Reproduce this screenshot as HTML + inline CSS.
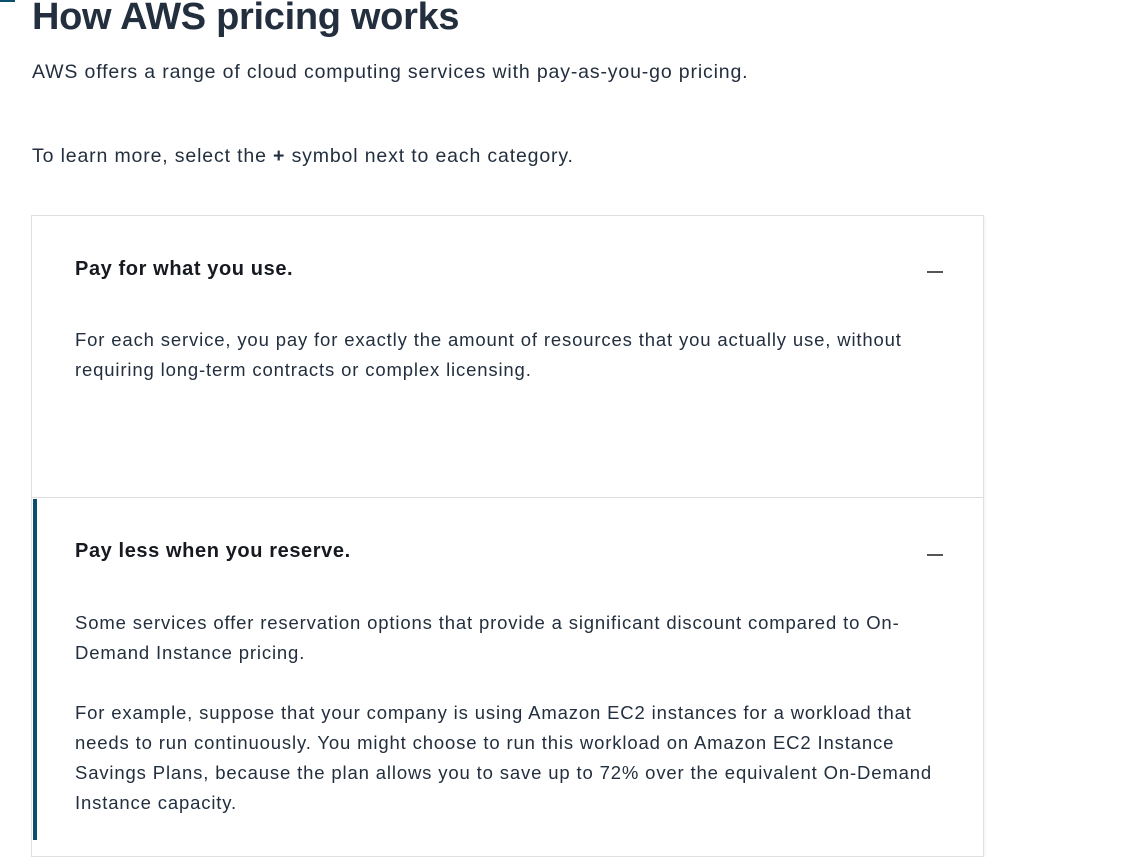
<!DOCTYPE html>
<html><head><meta charset="utf-8"><style>
html,body{margin:0;padding:0;background:#fff;width:1128px;height:840px;overflow:hidden;font-family:"Liberation Sans",sans-serif;color:#16191f;}
.mark{position:absolute;left:0;top:0;width:15px;height:2px;background:#0b4f6c}
h1{position:absolute;left:32px;top:-4px;margin:0;font-size:38px;font-weight:bold;color:#232f3e;letter-spacing:-0.3px;white-space:nowrap}
.p{position:absolute;font-size:19.5px;color:#232f3e;white-space:nowrap;letter-spacing:0.85px}
.card{position:absolute;left:31px;top:215px;width:951px;height:640px;border:1px solid #e0e0e0;box-shadow:1px 1px 3px rgba(0,0,0,0.06)}
.div{position:absolute;left:32px;top:497px;width:951px;height:1px;background:#ddd}
.bar{position:absolute;left:33px;top:499px;width:4px;height:341px;background:#0b4f6c}
.h{position:absolute;left:75px;font-size:20px;font-weight:bold;color:#16191f;white-space:nowrap;letter-spacing:0.6px}
.t{position:absolute;left:75px;font-size:18.5px;line-height:30px;color:#232f3e;white-space:nowrap;letter-spacing:0.85px}
.dash{position:absolute;left:927px;width:16px;height:2px;background:#555}
</style></head><body>
<div class="mark"></div>
<h1>How AWS pricing works</h1>
<div class="p" style="left:32px;top:61px">AWS offers a range of cloud computing services with pay-as-you-go pricing.</div>
<div class="p" style="left:32px;top:145px">To learn more, select the <b>+</b> symbol next to each category.</div>
<div class="card"></div>
<div class="div"></div>
<div class="bar"></div>
<div class="h" style="top:258px">Pay for what you use.</div>
<div class="dash" style="top:271px"></div>
<div class="t" style="top:325px">For each service, you pay for exactly the amount of resources that you actually use, without<br>requiring long-term contracts or complex licensing.</div>
<div class="h" style="top:540px">Pay less when you reserve.</div>
<div class="dash" style="top:554px"></div>
<div class="t" style="top:608px">Some services offer reservation options that provide a significant discount compared to On-<br>Demand Instance pricing.</div>
<div class="t" style="top:698px">For example, suppose that your company is using Amazon EC2 instances for a workload that<br>needs to run continuously. You might choose to run this workload on Amazon EC2 Instance<br>Savings Plans, because the plan allows you to save up to 72% over the equivalent On-Demand<br>Instance capacity.</div>
</body></html>
